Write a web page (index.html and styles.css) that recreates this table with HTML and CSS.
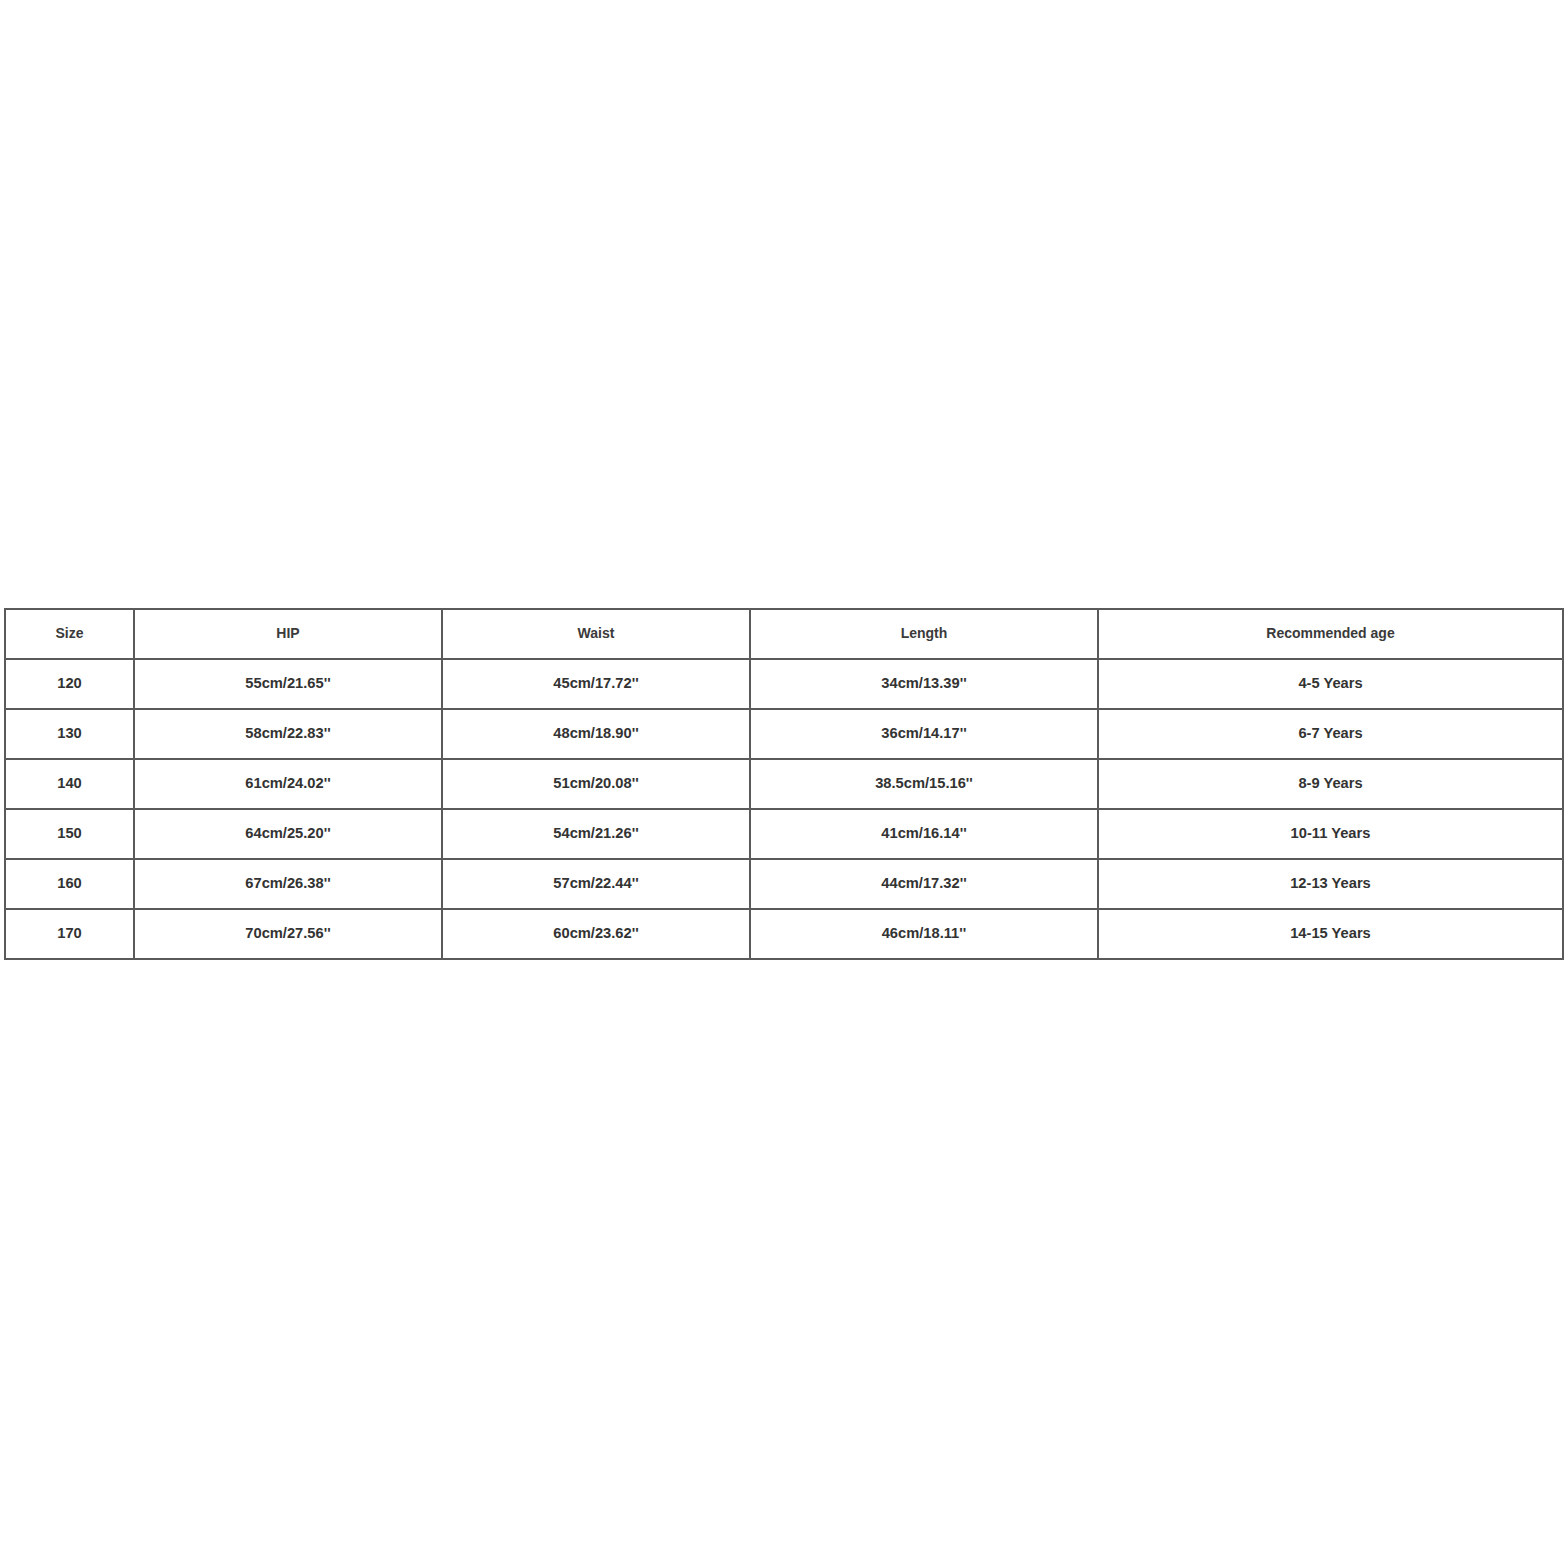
FILE: index.html
```html
<!DOCTYPE html>
<html>
<head>
<meta charset="utf-8">
<link rel="stylesheet" href="styles.css">
</head>
<body>
<div class="page">
<table class="sizes">
<colgroup>
<col class="c1"><col class="c2"><col class="c3"><col class="c4"><col class="c5">
</colgroup>
<tr class="head"><td>Size</td><td>HIP</td><td>Waist</td><td>Length</td><td>Recommended age</td></tr>
<tr><td>120</td><td>55cm/21.65''</td><td>45cm/17.72''</td><td>34cm/13.39''</td><td>4-5 Years</td></tr>
<tr><td>130</td><td>58cm/22.83''</td><td>48cm/18.90''</td><td>36cm/14.17''</td><td>6-7 Years</td></tr>
<tr><td>140</td><td>61cm/24.02''</td><td>51cm/20.08''</td><td>38.5cm/15.16''</td><td>8-9 Years</td></tr>
<tr><td>150</td><td>64cm/25.20''</td><td>54cm/21.26''</td><td>41cm/16.14''</td><td>10-11 Years</td></tr>
<tr><td>160</td><td>67cm/26.38''</td><td>57cm/22.44''</td><td>44cm/17.32''</td><td>12-13 Years</td></tr>
<tr><td>170</td><td>70cm/27.56''</td><td>60cm/23.62''</td><td>46cm/18.11''</td><td>14-15 Years</td></tr>
</table>
</div>
</body>
</html>
```
FILE: styles.css
```css
html, body {
  margin: 0;
  padding: 0;
  background: #fff;
}
.page {
  padding: 608px 4px 0 4px;
}
.sizes {
  width: 1558px;
  border-collapse: collapse;
  table-layout: fixed;
  font-family: "Liberation Sans", Arial, sans-serif;
  font-size: 14.7px;
  color: #333;
}
.c1 { width: 129px; }
.c2 { width: 308px; }
.c3 { width: 308px; }
.c4 { width: 348px; }
.c5 { width: 465px; }
.sizes td {
  border: 2px solid #5a5a5a;
  height: 46px;
  padding: 0 0 2px 0;
  text-align: center;
  vertical-align: middle;
  font-weight: bold;
}
.sizes .head td {
  font-size: 14px;
  color: #3a3a3a;
}
```
